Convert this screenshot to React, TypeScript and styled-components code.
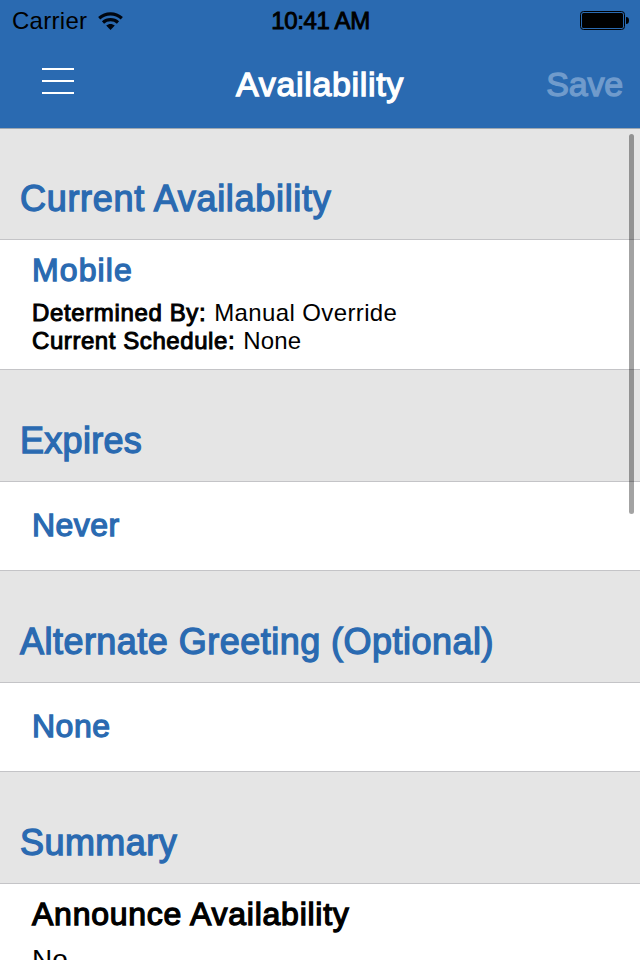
import React from "react";
import styled, { createGlobalStyle } from "styled-components";

const BLUE = "#2a6ab1";

const GlobalStyle = createGlobalStyle`
  html, body { margin: 0; padding: 0; }
  body { overflow: hidden; background: #fff; }
`;

const Screen = styled.div`
  position: relative;
  width: 640px;
  height: 960px;
  overflow: hidden;
  background: #fff;
  color: #000;
  font-family: "Liberation Sans", Arial, sans-serif;
  font-size: 24px;
`;

/* Regular face thickened slightly to give a medium weight. */
const Medium = styled.span<{ $track?: number; $weight?: number }>`
  letter-spacing: ${(p) => p.$track ?? 0}px;
  -webkit-text-stroke: ${(p) => p.$weight ?? 1.3}px currentColor;
  white-space: pre;
`;

const Plain = styled.span<{ $track?: number }>`
  letter-spacing: ${(p) => p.$track ?? 0}px;
  white-space: pre;
`;

const Header = styled.header`
  box-sizing: border-box;
  height: 129px;
  background: ${BLUE};
  border-bottom: 1px solid #9fa8b1;
`;

const StatusBar = styled.div`
  display: grid;
  grid-template-columns: 1fr auto 1fr;
  align-items: center;
  height: 40px;
  padding: 1px 11px 0 12px;
  box-sizing: border-box;
`;

const Carrier = styled.div`
  display: flex;
  align-items: center;
  gap: 11px;
`;

const BatterySlot = styled.div`
  display: flex;
  justify-content: flex-end;
`;

const NavBar = styled.nav`
  display: grid;
  grid-template-columns: 1fr auto 1fr;
  align-items: center;
  height: 88px;
  padding: 0 17px 0 17px;
`;

const MenuButton = styled.button`
  display: flex;
  flex-direction: column;
  justify-content: space-between;
  width: 32px;
  height: 26px;
  margin: -6px 0 0 25px;
  padding: 0;
  border: 0;
  background: none;
`;

const MenuLine = styled.span`
  height: 2px;
  background: #fff;
`;

const Title = styled.h1`
  margin: 0;
  font-size: 34px;
  font-weight: 400;
  line-height: 40px;
  color: #fff;
`;

const SaveButton = styled.button`
  justify-self: end;
  padding: 0;
  border: 0;
  background: none;
  font: 400 34px/40px "Liberation Sans", Arial, sans-serif;
  color: #709bcc;
`;

const SectionHeading = styled.h2<{ $first?: boolean }>`
  box-sizing: border-box;
  height: ${(p) => (p.$first ? 111 : 112)}px;
  margin: 0;
  padding: ${(p) => (p.$first ? 49 : 50)}px 0 0 20px;
  border-bottom: 1px solid #c4c4c7;
  background: #e5e5e5;
  color: ${BLUE};
  font-size: 36px;
  font-weight: 400;
  line-height: 42px;
`;

const Cell = styled.div<{ $height: number; $top: number }>`
  box-sizing: border-box;
  height: ${(p) => p.$height}px;
  padding: ${(p) => p.$top}px 0 0 32px;
  border-bottom: 1px solid #c4c4c7;
  background: #fff;
`;

const CellTitle = styled.div<{ $dark?: boolean }>`
  font-size: 32px;
  line-height: 36px;
  color: ${(p) => (p.$dark ? "#000" : BLUE)};
`;

const Details = styled.div`
  margin-top: 11px;
`;

const DetailLine = styled.div`
  display: flex;
  gap: 8px;
  line-height: 28px;
`;

const SummaryValue = styled.div`
  margin-top: 12px;
  font-size: 28px;
  line-height: 32px;
`;

const ScrollThumb = styled.div`
  position: absolute;
  top: 134px;
  right: 6px;
  width: 5px;
  height: 380px;
  border-radius: 3px;
  background: rgba(0, 0, 0, 0.36);
`;

function WifiIcon() {
  return (
    <svg width="25" height="18" viewBox="0 0 25 18" fill="none" stroke="#000610" strokeWidth="3.2">
      <path d="M1.2 6.2C7.7 0.4 17.3 0.4 23.8 6.2" />
      <path d="M5 10.5C9.3 6.7 15.7 6.7 20 10.5" />
      <path d="M8.2 13.6C10.7 11.3 14.3 11.3 16.8 13.6L12.5 18Z" fill="#000610" stroke="none" />
    </svg>
  );
}

function BatteryIcon() {
  return (
    <svg width="49" height="19" viewBox="0 0 49 19">
      <rect x="0.5" y="0.5" width="44" height="18" rx="3" fill="none" stroke="#000" />
      <rect x="2" y="2" width="41" height="15" rx="1.5" fill="#000" />
      <path d="M46 6C48 6 49 7 49 9.5S48 13 46 13Z" fill="#000" />
    </svg>
  );
}

export default function App() {
  return (
    <Screen>
      <GlobalStyle />
      <Header>
        <StatusBar>
          <Carrier>
            <Plain $track={0.28}>Carrier</Plain>
            <WifiIcon />
          </Carrier>
          <Medium $track={-0.35} $weight={0.9}>10:41 AM</Medium>
          <BatterySlot>
            <BatteryIcon />
          </BatterySlot>
        </StatusBar>
        <NavBar>
          <MenuButton aria-label="Menu">
            <MenuLine />
            <MenuLine />
            <MenuLine />
          </MenuButton>
          <Title>
            <Medium $track={0.65}>Availability</Medium>
          </Title>
          <SaveButton>
            <Medium $track={-0.2}>Save</Medium>
          </SaveButton>
        </NavBar>
      </Header>
      <main>
        <SectionHeading $first>
          <Medium $track={0.7}>Current Availability</Medium>
        </SectionHeading>
        <Cell $height={130} $top={12}>
          <CellTitle>
            <Medium $track={1.1}>Mobile</Medium>
          </CellTitle>
          <Details>
            <DetailLine>
              <Medium $track={0.63} $weight={1}>Determined By:</Medium>
              <Plain $track={0.38}>Manual Override</Plain>
            </DetailLine>
            <DetailLine>
              <Medium $track={0.57} $weight={1}>Current Schedule:</Medium>
              <Plain $track={0.2}>None</Plain>
            </DetailLine>
          </Details>
        </Cell>
        <SectionHeading>
          <Medium $track={0.3}>Expires</Medium>
        </SectionHeading>
        <Cell $height={89} $top={25}>
          <CellTitle>
            <Medium $track={0.45}>Never</Medium>
          </CellTitle>
        </Cell>
        <SectionHeading>
          <Medium $track={0.47}>Alternate Greeting (Optional)</Medium>
        </SectionHeading>
        <Cell $height={89} $top={25}>
          <CellTitle>
            <Medium $track={0.5}>None</Medium>
          </CellTitle>
        </Cell>
        <SectionHeading>
          <Medium $track={0.45}>Summary</Medium>
        </SectionHeading>
        <Cell $height={130} $top={12}>
          <CellTitle $dark>
            <Medium $track={0.75}>Announce Availability</Medium>
          </CellTitle>
          <SummaryValue>
            <Plain>No</Plain>
          </SummaryValue>
        </Cell>
      </main>
      <ScrollThumb />
    </Screen>
  );
}
